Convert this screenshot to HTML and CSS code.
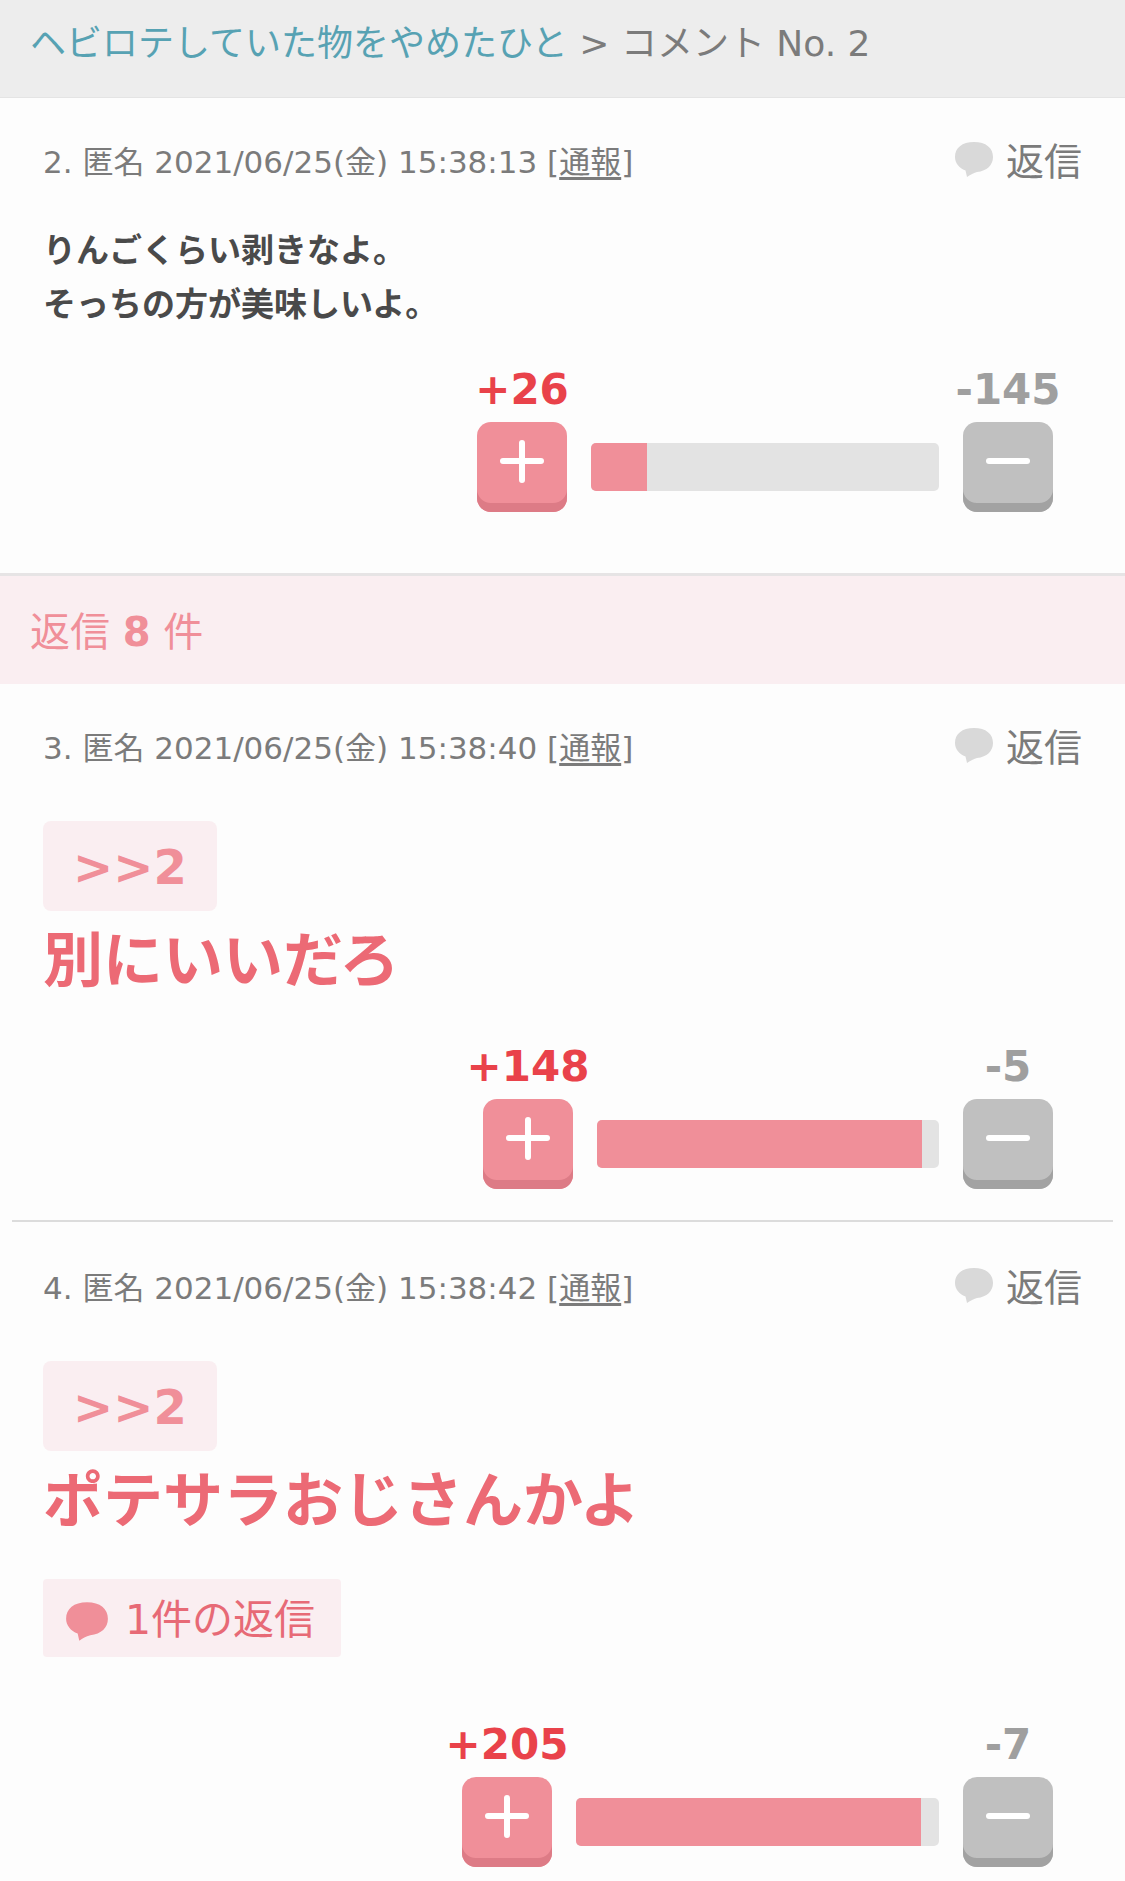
FILE: index.html
```html
<!DOCTYPE html>
<html lang="ja">
<head>
    <meta charset="UTF-8">
    <meta name="viewport" content="width=device-width">
    <title>コメント No. 2</title>
    <link rel="stylesheet" href="styles.css">
</head>
<body>
    <svg class="symbols" aria-hidden="true">
        <symbol id="bubble" viewBox="0 0 40 36">
            <path d="M20 0C8 0 1 6 1 15c0 6 4 11 10.500 13.500L13 35c3-2 6-4 10-5 10-1 16-7 16-15C39 6 32 0 20 0z"/>
        </symbol>
        <symbol id="plus" viewBox="0 0 48 48">
            <path d="M5 24h38M24 6v37"/>
        </symbol>
        <symbol id="minus" viewBox="0 0 48 48">
            <path d="M5 24h38"/>
        </symbol>
    </svg>

    <header class="topic-path">
        <a href="#">ヘビロテしていた物をやめたひと</a> &gt; コメント No. 2
    </header>

    <main>
        <article class="comment comment-parent">
            <div class="comment-head">
                <p class="info">2. 匿名 2021/06/25(金) 15:38:13 [<a href="#">通報</a>]</p>
                <button type="button" class="reply-button"><svg class="bubble"><use href="#bubble"/></svg>返信</button>
            </div>
            <div class="body">
                <p class="text">りんごくらい剥きなよ。<br>そっちの方が美味しいよ。</p>
            </div>
            <div class="vote vote-medium">
                <div class="vote-side plus">
                    <span class="count">+26</span>
                    <button type="button" class="vote-button" aria-label="プラス"><svg><use href="#plus"/></svg></button>
                </div>
                <div class="bar"><div class="bar-fill" style="width: 16%"></div></div>
                <div class="vote-side minus">
                    <span class="count">-145</span>
                    <button type="button" class="vote-button" aria-label="マイナス"><svg><use href="#minus"/></svg></button>
                </div>
            </div>
        </article>

        <h2 class="reply-title">返信 <b>8</b> 件</h2>

        <article class="comment">
            <div class="comment-head">
                <p class="info">3. 匿名 2021/06/25(金) 15:38:40 [<a href="#">通報</a>]</p>
                <button type="button" class="reply-button"><svg class="bubble"><use href="#bubble"/></svg>返信</button>
            </div>
            <div class="body body-reply">
                <a href="#" class="anchor">&gt;&gt;2</a>
                <p class="text-large">別にいいだろ</p>
            </div>
            <div class="vote vote-narrow">
                <div class="vote-side plus">
                    <span class="count">+148</span>
                    <button type="button" class="vote-button" aria-label="プラス"><svg><use href="#plus"/></svg></button>
                </div>
                <div class="bar"><div class="bar-fill" style="width: 95%"></div></div>
                <div class="vote-side minus">
                    <span class="count">-5</span>
                    <button type="button" class="vote-button" aria-label="マイナス"><svg><use href="#minus"/></svg></button>
                </div>
            </div>
        </article>

        <hr class="divider">

        <article class="comment">
            <div class="comment-head">
                <p class="info">4. 匿名 2021/06/25(金) 15:38:42 [<a href="#">通報</a>]</p>
                <button type="button" class="reply-button"><svg class="bubble"><use href="#bubble"/></svg>返信</button>
            </div>
            <div class="body body-reply">
                <a href="#" class="anchor">&gt;&gt;2</a>
                <p class="text-large">ポテサラおじさんかよ</p>
                <a href="#" class="reply-count"><svg class="bubble"><use href="#bubble"/></svg>1件の返信</a>
            </div>
            <div class="vote vote-wide">
                <div class="vote-side plus">
                    <span class="count">+205</span>
                    <button type="button" class="vote-button" aria-label="プラス"><svg><use href="#plus"/></svg></button>
                </div>
                <div class="bar"><div class="bar-fill" style="width: 95%"></div></div>
                <div class="vote-side minus">
                    <span class="count">-7</span>
                    <button type="button" class="vote-button" aria-label="マイナス"><svg><use href="#minus"/></svg></button>
                </div>
            </div>
        </article>
    </main>
</body>
</html>
```

FILE: styles.css
```css
* {
    box-sizing: border-box;
}

body {
    margin: 0;
    background-color: #fdfdfd;
    color: #7b7b7b;
    font-family: Verdana, "DejaVu Sans", "Noto Sans CJK JP", sans-serif;
}

p, h2 {
    margin: 0;
}

button {
    padding: 0;
    border: none;
    background: none;
    color: inherit;
    font-family: inherit;
    cursor: pointer;
}

.symbols {
    display: none;
}

/* パンくず */
.topic-path {
    padding: 17px 30px 26px;
    background-color: #ededed;
    border-bottom: 1px solid #e4e4e4;
    font-size: 36px;
    line-height: 54px;
}

.topic-path a {
    color: #57a2b3;
    text-decoration: none;
}

/* コメント */
.comment {
    padding: 37px 43px 31px;
}

.comment-parent {
    padding-bottom: 61px;
}

.comment-head {
    display: flex;
    justify-content: space-between;
    align-items: center;
}

.info {
    font-size: 31px;
    line-height: 54px;
}

.info a {
    color: inherit;
    text-underline-offset: 4px;
}

.reply-button {
    display: flex;
    align-items: center;
    gap: 12px;
    font-size: 38px;
    line-height: 54px;
}

.bubble {
    width: 40px;
    height: 36px;
    fill: #d9d9d9;
}

.reply-button .bubble {
    margin-bottom: 4px;
}

.body {
    margin-top: 35px;
}

.body-reply {
    display: flex;
    flex-direction: column;
    align-items: flex-start;
    margin-top: 46px;
}

.text {
    color: #4a4a4a;
    font-size: 33px;
    font-weight: bold;
    line-height: 54px;
}

.text-large {
    padding-top: 3px;
    color: #ec6a75;
    font-size: 60px;
    font-weight: bold;
    line-height: 95px;
}

.anchor {
    padding: 2px 30px 0;
    border-radius: 8px;
    background-color: #faeef1;
    color: #f08f99;
    font-size: 48px;
    font-weight: bold;
    line-height: 88px;
    text-decoration: none;
}

.reply-count {
    display: flex;
    align-items: center;
    gap: 16px;
    margin: 30px 0;
    padding: 4px 26px 0 22px;
    border-radius: 4px;
    background-color: #faeef1;
    color: #e76a76;
    font-size: 41px;
    line-height: 74px;
    text-decoration: none;
}

.reply-count .bubble {
    width: 44px;
    height: 40px;
    margin-top: 4px;
    fill: #f08f99;
}

/* プラス・マイナス */
.vote {
    display: flex;
    align-items: flex-end;
    gap: 24px;
    margin: 33px 29px 0 auto;
}

.vote-narrow {
    width: 570px;
}

.vote-medium {
    width: 576px;
}

.vote-wide {
    width: 591px;
}

.vote-side {
    display: flex;
    flex-direction: column;
    align-items: center;
    gap: 7px;
    width: 90px;
}

.count {
    font-size: 42px;
    font-weight: bold;
    line-height: 50px;
    white-space: nowrap;
}

.plus .count {
    color: #e9424a;
}

.minus .count {
    color: #9f9f9f;
}

.vote-button {
    display: flex;
    justify-content: center;
    width: 90px;
    height: 90px;
    padding-top: 15px;
    border-radius: 14px;
}

.vote-button svg {
    width: 48px;
    height: 48px;
    fill: none;
    stroke: #fff;
    stroke-width: 6;
    stroke-linecap: round;
}

.plus .vote-button {
    background-color: #f08f99;
    box-shadow: inset 0 -9px 0 #dd7b86;
}

.minus .vote-button {
    background-color: #c0c0c0;
    box-shadow: inset 0 -9px 0 #a2a2a2;
}

.bar {
    flex: 1;
    height: 48px;
    margin-bottom: 21px;
    border-radius: 5px;
    background-color: #e3e3e3;
    overflow: hidden;
}

.bar-fill {
    height: 100%;
    background-color: #f08f99;
}

/* 返信一覧 */
.reply-title {
    padding: 29px 30px 25px;
    border-top: 3px solid #e6e4e5;
    background-color: #faeef1;
    color: #f08f99;
    font-size: 40px;
    font-weight: normal;
    line-height: 54px;
}

.divider {
    height: 2px;
    margin: 0 12px 2px;
    border: none;
    background-color: #dcdcdc;
}
```
